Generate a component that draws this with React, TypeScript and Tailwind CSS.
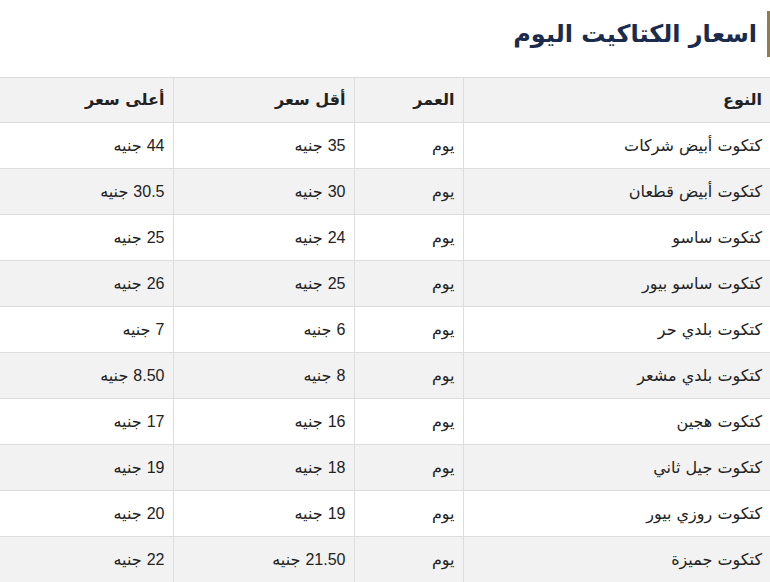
const rows = [
  ["كتكوت أبيض شركات", "يوم", "35", "44"],
  ["كتكوت أبيض قطعان", "يوم", "30", "30.5"],
  ["كتكوت ساسو", "يوم", "24", "25"],
  ["كتكوت ساسو بيور", "يوم", "25", "26"],
  ["كتكوت بلدي حر", "يوم", "6", "7"],
  ["كتكوت بلدي مشعر", "يوم", "8", "8.50"],
  ["كتكوت هجين", "يوم", "16", "17"],
  ["كتكوت جيل ثاني", "يوم", "18", "19"],
  ["كتكوت روزي بيور", "يوم", "19", "20"],
  ["كتكوت جميزة", "يوم", "21.50", "22"],
];

const headers = ["النوع", "العمر", "أقل سعر", "أعلى سعر"];

function Price({ value }: { value: string }) {
  return (
    <>
      <span className="font-['Liberation_Sans',sans-serif]">{value}</span> جنيه
    </>
  );
}

export default function App() {
  return (
    <div
      dir="rtl"
      className="w-[770px] bg-white text-[#222] font-['DejaVu_Sans',sans-serif]"
    >
      <div className="pt-[11px] pb-[20px]">
        <h2 className="h-[46px] flex items-center border-r-[3px] border-[#8c7d55] pr-[10px] text-[24px] font-bold text-[#1b2b4d]">
          اسعار الكتاكيت اليوم
        </h2>
      </div>

      <table className="w-[770px] table-fixed border-collapse text-[16px]">
        <colgroup>
          <col className="w-[307px]" />
          <col className="w-[109px]" />
          <col className="w-[181px]" />
          <col className="w-[173px]" />
        </colgroup>
        <thead>
          <tr className="bg-[#f2f2f2] h-[45px]">
            {headers.map((h, i) => (
              <th
                key={h}
                className={`border-y border-[#ddd] px-2 text-right font-bold ${i < 3 ? "border-l" : ""}`}
              >
                {h}
              </th>
            ))}
          </tr>
        </thead>
        <tbody>
          {rows.map((r, ri) => (
            <tr key={ri} className={`h-[46px] ${ri % 2 === 1 ? "bg-[#f2f2f2]" : "bg-white"}`}>
              <td className="border-y border-l border-[#ddd] px-2 text-right">{r[0]}</td>
              <td className="border-y border-l border-[#ddd] px-2 text-right">{r[1]}</td>
              <td className="border-y border-l border-[#ddd] px-2 text-right">
                <Price value={r[2]} />
              </td>
              <td className="border-y border-[#ddd] px-2 text-right">
                <Price value={r[3]} />
              </td>
            </tr>
          ))}
        </tbody>
      </table>
    </div>
  );
}
